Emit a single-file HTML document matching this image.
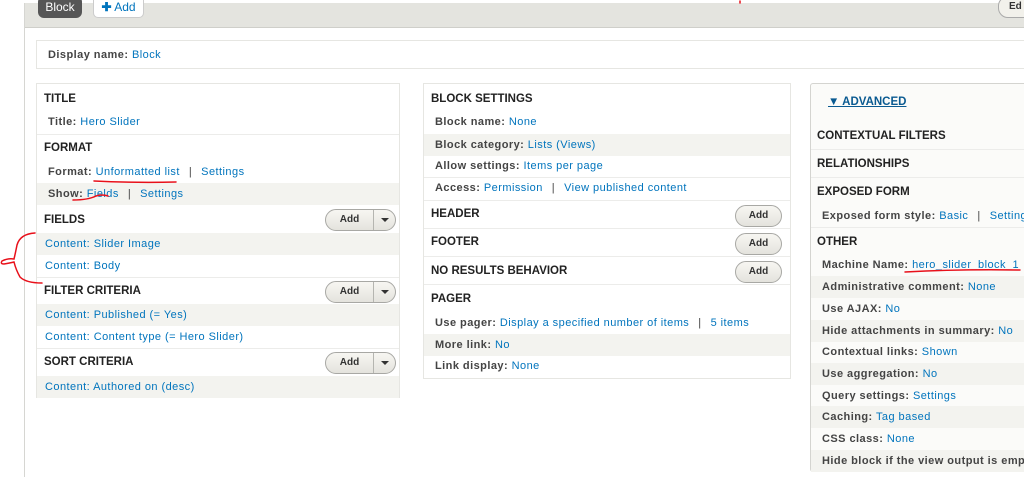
<!DOCTYPE html>
<html><head><meta charset="utf-8">
<style>
*{margin:0;padding:0;box-sizing:border-box}
body{width:1024px;height:477px;overflow:hidden;background:#fff;font-family:"Liberation Sans",sans-serif;font-size:11px;color:#333;position:relative}
.a{position:absolute}
.top{left:25px;top:3px;width:999px;height:25px;background:#e4e4df;border-bottom:1px solid #cfcfca}
.vl{left:24px;top:3px;width:1px;height:474px;background:#d6d6d2}
.tab1{left:38px;top:-4px;width:44px;height:22px;background:#565656;border-radius:6px;color:#fff;font-size:12px;text-align:center;line-height:22px}
.tab2{left:93px;top:-4px;width:51px;height:22px;background:#fff;border:1px solid #ccc;border-top:none;border-radius:0 0 5px 5px;color:#0074bd;font-size:12px;text-align:center;line-height:22px}
.ed{left:998px;top:-4px;width:40px;height:22px;background:#f2f1eb;border:1px solid #aaa;border-radius:10px;font-size:10px;font-weight:bold;padding-left:10px;line-height:20px}
.box{border:1px solid #e6e6e2;background:#fff}
.h{position:absolute;font-weight:bold;font-size:11.5px;color:#222;left:7px}
.r{position:absolute;left:0;right:0;height:22px;line-height:22px;padding-left:11px;white-space:nowrap;overflow:hidden;letter-spacing:0.45px}
.s{background:#f3f3ef}
.r b{color:#444}
.r i{font-style:normal;color:#0074bd}
.r .p{color:#444;margin:0 9px}
.sep{position:absolute;left:0;right:0;height:1px;background:#ececea}
.btn{position:absolute;height:22px;border:1px solid #a8a8a4;border-radius:11px;background:linear-gradient(#f7f6f2,#e4e3dd);font-weight:bold;font-size:10px;color:#333;line-height:20px;text-align:center}
.dd{width:71px}
.dd span{position:absolute;left:0;width:47px;top:0}
.dd em{position:absolute;left:47px;top:0;bottom:0;border-left:1px solid #b5b5b0;width:23px}
.dd em:after{content:"";position:absolute;left:7px;top:8px;border:4px solid transparent;border-top:4px solid #333}
.sb{width:47px}
</style></head><body>
<div class="a top"></div>
<div class="a vl"></div>
<div class="a tab1">Block</div>
<div class="a tab2"><span style="font-weight:bold">✚</span> Add</div>
<div class="a ed">Ed</div>

<div class="a box" style="left:36px;top:40px;width:990px;height:29px"><div class="r" style="top:3px"><b>Display name:</b> <i>Block</i></div></div>

<!-- LEFT -->
<div class="a box" style="left:36px;top:83px;width:364px;height:315px">
<div class="h" style="top:9px">TITLE</div>
<div class="r" style="top:27px"><b>Title:</b> <i>Hero Slider</i></div>
<div class="sep" style="top:50px"></div>
<div class="h" style="top:58px">FORMAT</div>
<div class="r" style="top:77px"><b>Format:</b> <i>Unformatted list</i><span class="p">|</span><i>Settings</i></div>
<div class="r s" style="top:99px"><b>Show:</b> <i>Fields</i><span class="p">|</span><i>Settings</i></div>
<div class="h" style="top:130px">FIELDS</div>
<div class="btn dd" style="left:288px;top:125px"><span>Add</span><em></em></div>
<div class="r s" style="top:149px;padding-left:8px"><i>Content: Slider Image</i></div>
<div class="r" style="top:171px;padding-left:8px"><i>Content: Body</i></div>
<div class="sep" style="top:193px"></div>
<div class="h" style="top:201px">FILTER CRITERIA</div>
<div class="btn dd" style="left:288px;top:197px"><span>Add</span><em></em></div>
<div class="r s" style="top:220px;padding-left:8px"><i>Content: Published (= Yes)</i></div>
<div class="r" style="top:242px;padding-left:8px"><i>Content: Content type (= Hero Slider)</i></div>
<div class="sep" style="top:264px"></div>
<div class="h" style="top:272px">SORT CRITERIA</div>
<div class="btn dd" style="left:288px;top:268px"><span>Add</span><em></em></div>
<div class="r s" style="top:292px;padding-left:8px"><i>Content: Authored on (desc)</i></div>
</div>

<!-- MIDDLE -->
<div class="a box" style="left:423px;top:83px;width:368px;height:296px">
<div class="h" style="top:9px">BLOCK SETTINGS</div>
<div class="r" style="top:27px"><b>Block name:</b> <i>None</i></div>
<div class="r s" style="top:50px"><b>Block category:</b> <i>Lists (Views)</i></div>
<div class="r" style="top:71px"><b>Allow settings:</b> <i>Items per page</i></div>
<div class="sep" style="top:93px"></div>
<div class="r" style="top:93px"><b>Access:</b> <i>Permission</i><span class="p">|</span><i>View published content</i></div>
<div class="sep" style="top:116px"></div>
<div class="h" style="top:124px">HEADER</div>
<div class="btn sb" style="left:311px;top:121px">Add</div>
<div class="sep" style="top:144px"></div>
<div class="h" style="top:152px">FOOTER</div>
<div class="btn sb" style="left:311px;top:149px">Add</div>
<div class="sep" style="top:172px"></div>
<div class="h" style="top:181px">NO RESULTS BEHAVIOR</div>
<div class="btn sb" style="left:311px;top:177px">Add</div>
<div class="sep" style="top:200px"></div>
<div class="h" style="top:209px">PAGER</div>
<div class="r" style="top:228px"><b>Use pager:</b> <i>Display a specified number of items</i><span class="p">|</span><i>5 items</i></div>
<div class="r s" style="top:250px"><b>More link:</b> <i>No</i></div>
<div class="r" style="top:271px"><b>Link display:</b> <i>None</i></div>
</div>

<!-- RIGHT -->
<div class="a" style="left:810px;top:83px;width:220px;height:389px;border:1px solid #d4d4d0;background:#fbfbf9;border-radius:3px">
<div class="a" style="left:17px;top:12px;font-weight:bold;font-size:11.5px;color:#0a5a91;text-decoration:underline">▼ ADVANCED</div>
<div class="h" style="top:46px;left:6px">CONTEXTUAL FILTERS</div>
<div class="sep" style="top:65px"></div>
<div class="h" style="top:74px;left:6px">RELATIONSHIPS</div>
<div class="sep" style="top:93px"></div>
<div class="h" style="top:102px;left:6px">EXPOSED FORM</div>
<div class="r" style="top:121px"><b>Exposed form style:</b> <i>Basic</i><span class="p">|</span><i>Settings</i></div>
<div class="sep" style="top:143px"></div>
<div class="h" style="top:152px;left:6px">OTHER</div>
<div class="r" style="top:170px"><b>Machine Name:</b> <i>hero_slider_block_1</i></div>
<div class="r s" style="top:192px"><b>Administrative comment:</b> <i>None</i></div>
<div class="r" style="top:214px"><b>Use AJAX:</b> <i>No</i></div>
<div class="r s" style="top:236px"><b>Hide attachments in summary:</b> <i>No</i></div>
<div class="r" style="top:257px"><b>Contextual links:</b> <i>Shown</i></div>
<div class="r s" style="top:279px"><b>Use aggregation:</b> <i>No</i></div>
<div class="r" style="top:301px"><b>Query settings:</b> <i>Settings</i></div>
<div class="r s" style="top:322px"><b>Caching:</b> <i>Tag based</i></div>
<div class="r" style="top:344px"><b>CSS class:</b> <i>None</i></div>
<div class="r s" style="top:366px"><b>Hide block if the view output is empty</b></div>
</div>

<svg class="a" style="left:0;top:0" width="1024" height="477">
<g fill="none" stroke="#e8101a" stroke-width="1.5" stroke-linecap="round">
<path d="M94 181 Q135 183 176 182"/>
<path d="M73 200 Q88 200 96 196 Q102 194 108 196"/>
<path d="M35 233 Q20 234 17 245 Q15 255 14 259 Q8 258 2 261 Q0 264 4 264 Q10 263 14 262 Q16 270 20 277 Q26 283 42 283"/>
<path d="M905 272 Q960 269 1020 270"/>
<path d="M740 1 L740 3"/>
</g>
</svg>
</body></html>
